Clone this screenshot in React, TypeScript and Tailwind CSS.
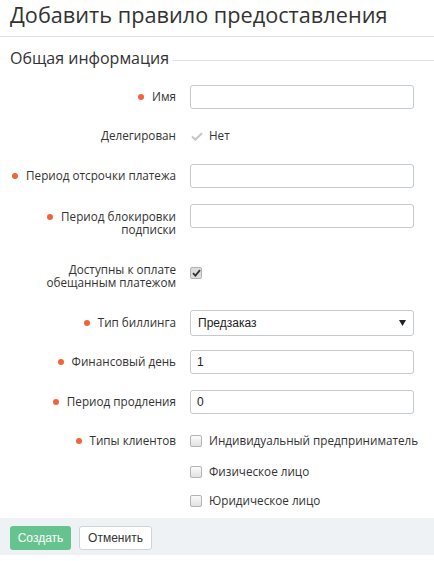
import React from "react";

const Dot = ({ mt = "mt-[5px]" }: { mt?: string }) => (
  <span className={`inline-block w-[6px] h-[6px] rounded-full bg-[#f4623a] shrink-0 mr-[8px] ${mt}`} />
);

const Box = ({ checked = false }: { checked?: boolean }) => (
  <span
    className={
      "inline-flex items-center justify-center w-[12px] h-[12px] rounded-[2px] border border-[#b4b4b4] shrink-0 " +
      (checked ? "bg-[#dcdcdc]" : "bg-gradient-to-b from-[#fbfbfb] to-[#e2e2e2]")
    }
  >
    {checked && (
      <svg width="9" height="8" viewBox="0 0 9 8">
        <path d="M1 4.2 L3.4 6.6 L8 1.2" fill="none" stroke="#333" strokeWidth="1.8" />
      </svg>
    )}
  </span>
);

const Input = ({ value = "" }: { value?: string }) => (
  <div className="h-[24px] w-[224px] border border-[#c5cad1] rounded-[3px] bg-white flex items-center px-[6px] text-[12px] text-[#222] font-['Liberation_Sans',Arial,sans-serif]">
    {value}
  </div>
);

export default function App() {
  return (
    <div className="w-[434px] h-[561px] bg-white font-['Open_Sans',sans-serif] text-[#333] overflow-hidden">
      <h1 className="h-[37px] border-b border-[#dde1e6] pl-[10px] text-[21.7px] leading-[30px] font-normal text-[#333]">
        Добавить правило предоставления
      </h1>

      <div className="flex mt-[11px] pl-[10px]">
        <span className="text-[16px] leading-[20px] text-[#333]">Общая информация</span>
        <span className="flex-1 h-px bg-[#dde1e6] mt-[12px] ml-[4px]" />
      </div>

      <div className="flex flex-col text-[11.7px]">
        {/* Имя */}
        <div className="grid grid-cols-[176px_224px] gap-x-[14px] mt-[17px] h-[24px]">
          <div className="flex justify-end items-center">
            <Dot mt="mt-0" />
            <span>Имя</span>
          </div>
          <Input />
        </div>

        {/* Делегирован */}
        <div className="grid grid-cols-[176px_224px] gap-x-[14px] mt-[15px] h-[24px]">
          <div className="flex justify-end items-center">
            <span>Делегирован</span>
          </div>
          <div className="flex items-center">
            <svg width="12" height="9" viewBox="0 0 12 9" className="ml-[1px]">
              <path d="M1 4.5 L4.3 7.6 L11 1.2" fill="none" stroke="#c4c8cc" strokeWidth="2.2" />
            </svg>
            <span className="ml-[6px]">Нет</span>
          </div>
        </div>

        {/* Период отсрочки платежа */}
        <div className="grid grid-cols-[176px_224px] gap-x-[14px] mt-[16px] h-[24px]">
          <div className="flex justify-end items-center">
            <Dot mt="mt-0" />
            <span>Период отсрочки платежа</span>
          </div>
          <Input />
        </div>

        {/* Период блокировки подписки */}
        <div className="grid grid-cols-[176px_224px] gap-x-[14px] mt-[16px] items-start">
          <div className="flex justify-end items-start pt-[6px] leading-[13px]">
            <Dot mt="mt-[4px]" />
            <span className="text-right">
              Период блокировки
              <br />
              подписки
            </span>
          </div>
          <Input />
        </div>

        {/* Доступны к оплате */}
        <div className="grid grid-cols-[176px_224px] gap-x-[14px] mt-[27px] items-start">
          <div className="flex justify-end leading-[13px]">
            <span className="text-right">
              Доступны к оплате
              <br />
              обещанным платежом
            </span>
          </div>
          <div className="pt-[1px]">
            <Box checked />
          </div>
        </div>

        {/* Тип биллинга */}
        <div className="grid grid-cols-[176px_224px] gap-x-[14px] mt-[21px] h-[26px]">
          <div className="flex justify-end items-center">
            <Dot mt="mt-0" />
            <span>Тип биллинга</span>
          </div>
          <div className="h-[26px] w-[224px] border border-[#c5cad1] rounded-[3px] bg-white flex items-center justify-between pl-[7px] pr-[7px] text-[12px] text-[#222] font-['Liberation_Sans',Arial,sans-serif]">
            <span>Предзаказ</span>
            <svg width="7" height="6" viewBox="0 0 7 6">
              <path d="M0 0 L7 0 L3.5 6 Z" fill="#222" />
            </svg>
          </div>
        </div>

        {/* Финансовый день */}
        <div className="grid grid-cols-[176px_224px] gap-x-[14px] mt-[14px] h-[24px]">
          <div className="flex justify-end items-center">
            <Dot mt="mt-0" />
            <span>Финансовый день</span>
          </div>
          <Input value="1" />
        </div>

        {/* Период продления */}
        <div className="grid grid-cols-[176px_224px] gap-x-[14px] mt-[16px] h-[24px]">
          <div className="flex justify-end items-center">
            <Dot mt="mt-0" />
            <span>Период продления</span>
          </div>
          <Input value="0" />
        </div>

        {/* Типы клиентов */}
        <div className="grid grid-cols-[176px_auto] gap-x-[14px] mt-[15px] h-[24px]">
          <div className="flex justify-end items-center">
            <Dot mt="mt-0" />
            <span>Типы клиентов</span>
          </div>
          <div className="flex items-center">
            <Box />
            <span className="ml-[7px] whitespace-nowrap">Индивидуальный предприниматель</span>
          </div>
        </div>
        <div className="grid grid-cols-[176px_auto] gap-x-[14px] mt-[7px] h-[24px]">
          <div />
          <div className="flex items-center">
            <Box />
            <span className="ml-[7px]">Физическое лицо</span>
          </div>
        </div>
        <div className="grid grid-cols-[176px_auto] gap-x-[14px] mt-[5px] h-[24px]">
          <div />
          <div className="flex items-center">
            <Box />
            <span className="ml-[7px]">Юридическое лицо</span>
          </div>
        </div>
      </div>

      <div className="mt-[5px] h-[37px] bg-[#eff2f5] flex items-start pt-[8px] pl-[10px] gap-[8px] font-['Liberation_Sans',Arial,sans-serif] text-[12px]">
        <button className="h-[24px] w-[61px] rounded-[3px] bg-[#64c38f] text-white">Создать</button>
        <button className="h-[24px] w-[73px] rounded-[3px] bg-white border border-[#d0d4d9] text-[#333]">Отменить</button>
      </div>
    </div>
  );
}
